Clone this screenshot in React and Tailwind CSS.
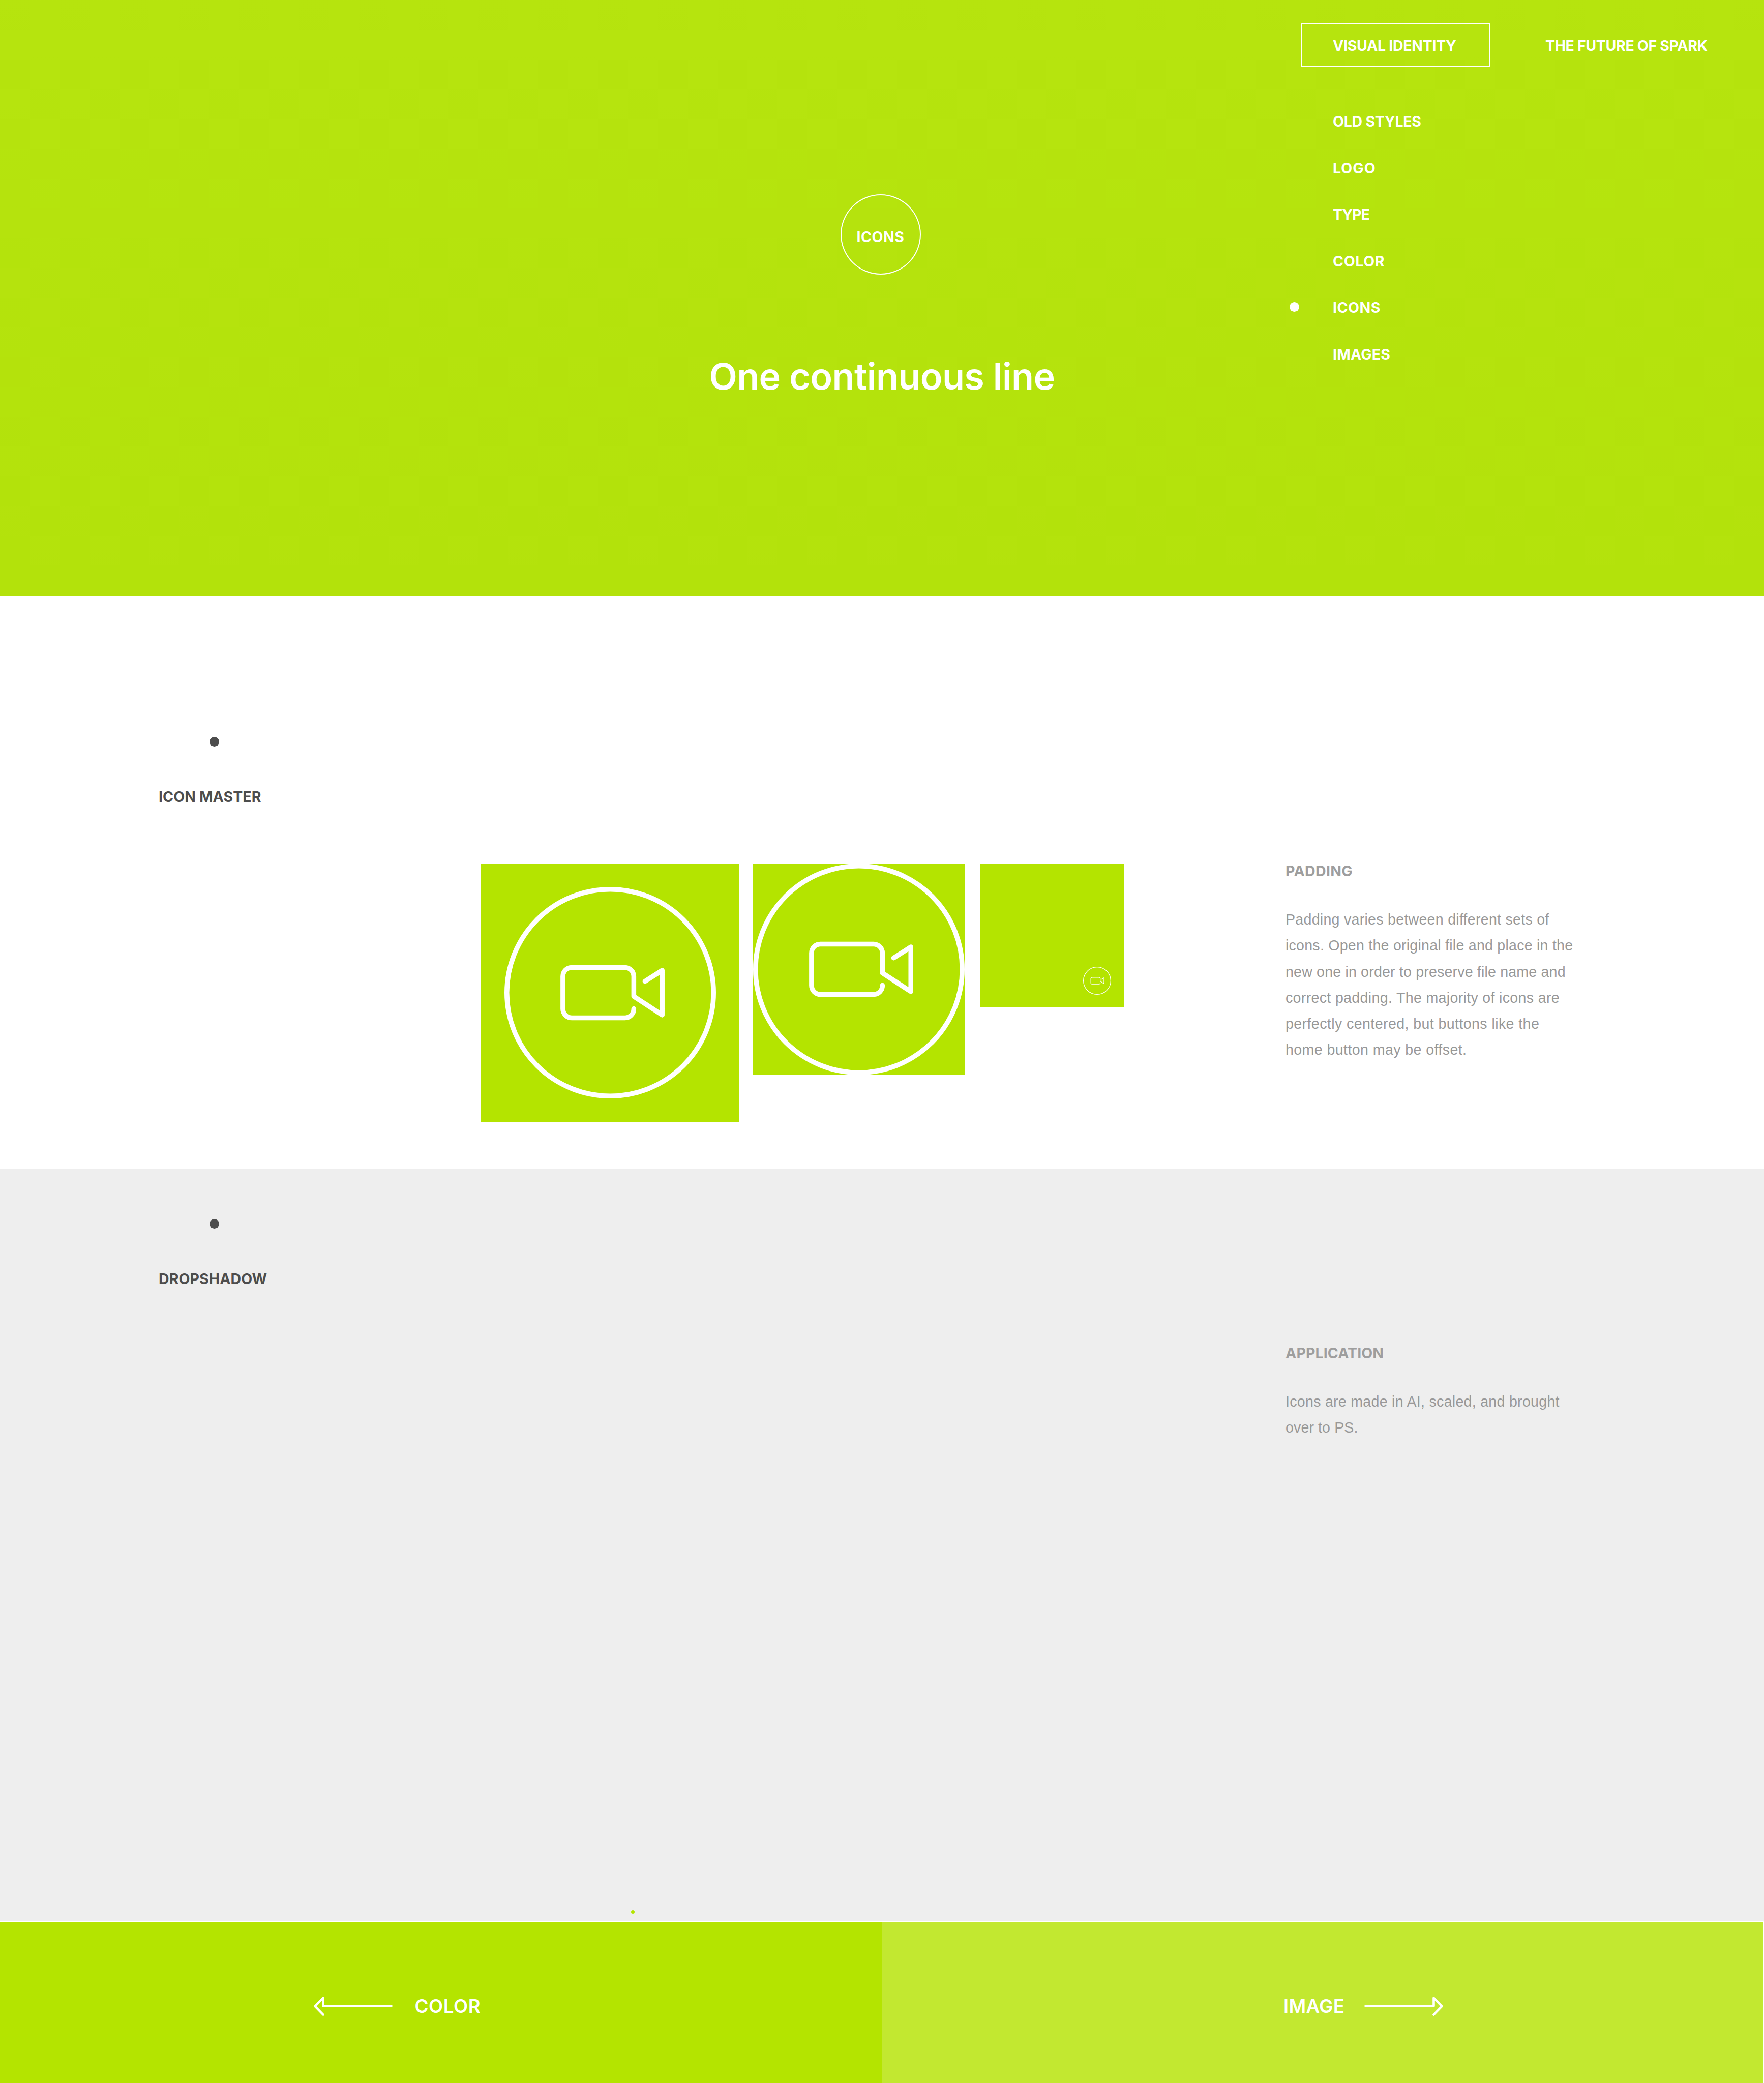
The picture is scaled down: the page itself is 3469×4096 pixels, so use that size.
function Label({ children, className = "" }) {
  return <div className={`font-['Inter',sans-serif] font-bold text-[28.5px] leading-[40px] whitespace-nowrap ${className}`}>{children}</div>;
}

function CameraIcon({ className }) {
  return (
    <svg viewBox="0 0 420 420" className={className} fill="none" stroke="white" strokeWidth="9.6" strokeLinecap="round" strokeLinejoin="round">
      <circle cx="210" cy="210" r="205.2" />
      <path d="M256.8 241.8v.6a17.6 17.6 0 0 1-17.6 17.6H134a18 18 0 0 1-18-18v-64.4a17.6 17.6 0 0 1 18-17.6h105.2a17.6 17.6 0 0 1 17.6 17.6v39.8L313.2 254.3v-88.6L279 187.5" />
    </svg>
  );
}

function Section({ title, titleClass, subtitle, subtitleClass, lines, className, children }) {
  return (
    <section className={`flex ${className}`}>
      <div className="w-[945.5px] shrink-0 pl-[312px]">
        <div className="ml-[99.5px] size-[19px] rounded-full bg-[#4d4d4d]" />
        <Label className={`mt-[79px] text-[#4d4d4d] ${titleClass}`}>{title}</Label>
      </div>
      <div className="flex w-[1582.5px] shrink-0 items-start pt-[249px]">{children}</div>
      <div className="pt-[244px] text-[#999]">
        <Label className={`text-[#9e9e9e] ${subtitleClass}`}>{subtitle}</Label>
        <div className="mt-[50px] font-['Liberation_Sans',sans-serif] text-[28.6px] leading-[51.3px] whitespace-nowrap">
          {lines.map(([text, tracking]) => <p key={text} className={tracking}>{text}</p>)}
        </div>
      </div>
    </section>
  );
}

const MENU = [
  ["OLD STYLES", "tracking-[-0.25px]"],
  ["LOGO", "tracking-[1px]"],
  ["TYPE", "tracking-[-1px]"],
  ["COLOR", "tracking-[0.6px]"],
  ["ICONS", "tracking-[0.5px]"],
  ["IMAGES", "tracking-[0.2px]"],
];

const PADDING_LINES = [
  ["Padding varies between different sets of", "tracking-[0.26px]"],
  ["icons. Open the original file and place in the", "tracking-[0.23px]"],
  ["new one in order to preserve file name and", "tracking-[0.17px]"],
  ["correct padding. The majority of icons are", "tracking-[0.32px]"],
  ["perfectly centered, but buttons like the", "tracking-[0.4px]"],
  ["home button may be offset.", "tracking-[0.4px]"],
];

const APPLICATION_LINES = [
  ["Icons are made in AI, scaled, and brought", "tracking-[0.27px]"],
  ["over to PS.", "tracking-[0.1px]"],
];

export default function App() {
  return (
    <div className="h-[4096px] w-[3469px] overflow-hidden bg-white">
      <header className="relative flex h-[1171px] flex-col items-center bg-linear-to-b from-[#b6e40e] to-[#b3e20b] text-white">
        <div className="mt-[382px] ml-[-6px] flex size-[158px] items-center justify-center rounded-full border-2 border-white">
          <Label className="pt-[9px] tracking-[0.5px]">ICONS</Label>
        </div>
        <h1 className="mt-[150px] font-['Inter',sans-serif] text-[72px] leading-[100px] font-semibold tracking-[-0.65px] whitespace-nowrap">One continuous line</h1>
        <nav className="absolute top-[45px] left-[2536px] w-[900px]">
          <div className="ml-[23px] flex h-[86px] items-center">
            <div className="flex h-full w-[372px] items-center border-2 border-white pt-[4px] pl-[60px]"><Label className="tracking-[-0.3px]">VISUAL IDENTITY</Label></div>
            <Label className="ml-[108px] pt-[4px] tracking-[-0.35px]">THE FUTURE OF SPARK</Label>
          </div>
          <ul className="mt-[61px]">
            {MENU.map(([name, tracking]) => (
              <li key={name} className="flex h-[91.5px] items-center">
                <span className={name === "ICONS" ? "size-[19px] rounded-full bg-white" : "size-[19px]"} />
                <Label className={`ml-[66px] pt-[3px] ${tracking}`}>{name}</Label>
              </li>
            ))}
          </ul>
        </nav>
      </header>
      <Section
        title="ICON MASTER"
        titleClass="tracking-[0.08px]"
        subtitle="PADDING"
        subtitleClass="tracking-[0.35px]"
        className="h-[1127px] pt-[278px]"
        lines={PADDING_LINES}
      >
        <div className="flex size-[508px] items-center justify-center bg-[#b4e400]"><CameraIcon className="size-[416px]" /></div>
        <div className="ml-[27.5px] size-[416px] bg-[#b4e400]"><CameraIcon className="size-[416px]" /></div>
        <div className="ml-[30px] flex size-[283px] items-end justify-end bg-[#b4e400] pr-[25px] pb-[25px]"><CameraIcon className="size-[55px]" /></div>
      </Section>
      <div className="relative">
        <Section
          title="DROPSHADOW"
          titleClass="tracking-[0.08px]"
          subtitle="APPLICATION"
          subtitleClass="tracking-[0.1px]"
          className="h-[1479px] bg-[#eee] pt-[99px]"
          lines={APPLICATION_LINES}
        />
        <span className="absolute bottom-[14px] left-[1241px] size-[7px] rounded-full bg-[#b4e400]" />
      </div>
      <footer className="mt-[3px] flex h-[315.5px] text-white">
        <div className="flex w-[1733.5px] items-center bg-[#b4e400] pt-[14px] pl-[616px]">
          <svg className="h-[38px] w-[156px]" viewBox="0 0 156 38" fill="none" stroke="white" strokeWidth="4.6" strokeLinecap="round" strokeLinejoin="round">
            <path d="M153.5 18.5H19.5V2.5L3.5 19L19.5 35.5" />
          </svg>
          <span className="ml-[43.5px] font-['Inter',sans-serif] text-[36.6px] leading-[48px] font-semibold tracking-[0.6px]">COLOR</span>
        </div>
        <div className="flex w-[1734px] items-center bg-[#c2e830] pt-[14px] pl-[790.5px]">
          <span className="font-['Inter',sans-serif] text-[36.6px] leading-[48px] font-semibold tracking-[0.3px]">IMAGE</span>
          <svg className="ml-[39px] h-[38px] w-[156px]" viewBox="0 0 156 38" fill="none" stroke="white" strokeWidth="4.6" strokeLinecap="round" strokeLinejoin="round">
            <path d="M2.5 18.5H136.5V2.5L152.5 19L136.5 35.5" />
          </svg>
        </div>
      </footer>
    </div>
  );
}
